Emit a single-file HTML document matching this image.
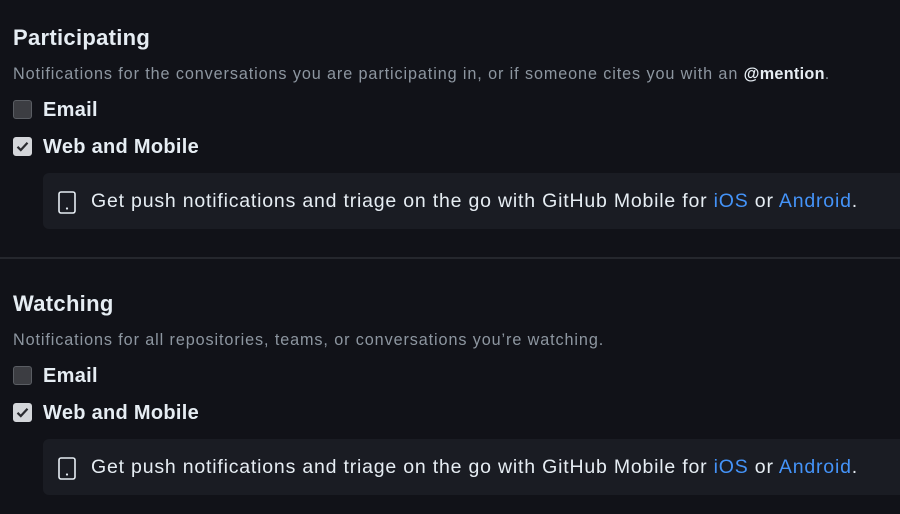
<!DOCTYPE html>
<html><head><style>
html,body{margin:0;padding:0;background:#111218;width:900px;height:514px;overflow:hidden;font-family:"Liberation Sans",sans-serif;}
.sec{position:absolute;left:0;width:900px;}
h2{position:absolute;left:13px;margin:0;font-size:22px;font-weight:600;color:#e6edf3;white-space:nowrap;letter-spacing:0.3px;}
.desc{position:absolute;left:13px;font-size:16.2px;letter-spacing:0.9px;color:#8d96a0;white-space:nowrap;}
.desc b{color:#e6edf3;letter-spacing:0.3px;}
.row{position:absolute;left:13px;height:19px;}
.cb{position:absolute;left:0;top:0;width:17px;height:17px;border:1px solid #5a5d63;border-radius:3px;background:#3c3d42;}
.cb.on{background:#d4d6da;border-color:#d4d6da;}
.lbl{position:absolute;left:30px;top:-1px;font-size:20px;font-weight:700;color:#e6edf3;white-space:nowrap;letter-spacing:0.3px;}
.box{position:absolute;left:43px;width:880px;height:56px;background:#1a1c23;border-radius:6px;}
.box svg{position:absolute;left:15px;top:18px;}
.box span{position:absolute;left:48px;top:17px;font-size:19.5px;letter-spacing:0.8px;color:#e6edf3;white-space:nowrap;}
.box a{color:#4493f8;text-decoration:none;}
.hr{position:absolute;left:0;top:257px;width:900px;height:2px;background:#25272d;}
</style></head><body>
<div class="sec" style="top:0">
<h2 style="top:25px">Participating</h2>
<div class="desc" style="top:65px">Notifications for the conversations you are participating in, or if someone cites you with an <b>@mention</b>.</div>
<div class="row" style="top:100px"><div class="cb"></div><div class="lbl">Email</div></div>
<div class="row" style="top:137px"><div class="cb on"><svg width="17" height="17" viewBox="0 0 17 17"><path d="M3.5 8.8 L6.8 12 L13.5 4.8" fill="none" stroke="#2a2b30" stroke-width="2.2"/></svg></div><div class="lbl">Web and Mobile</div></div>
<div class="box" style="top:173px"><svg width="18" height="23" viewBox="0 0 18 23"><rect x="1" y="1" width="16" height="21" rx="2" fill="none" stroke="#e6edf3" stroke-width="1.6"/><circle cx="9" cy="17.5" r="1.1" fill="#e6edf3"/></svg><span>Get push notifications and triage on the go with GitHub Mobile for <a>iOS</a> or <a>Android</a>.</span></div>
</div>
<div class="hr"></div>
<div class="sec" style="top:266px">
<h2 style="top:25px">Watching</h2>
<div class="desc" style="top:65px">Notifications for all repositories, teams, or conversations you’re watching.</div>
<div class="row" style="top:100px"><div class="cb"></div><div class="lbl">Email</div></div>
<div class="row" style="top:137px"><div class="cb on"><svg width="17" height="17" viewBox="0 0 17 17"><path d="M3.5 8.8 L6.8 12 L13.5 4.8" fill="none" stroke="#2a2b30" stroke-width="2.2"/></svg></div><div class="lbl">Web and Mobile</div></div>
<div class="box" style="top:173px"><svg width="18" height="23" viewBox="0 0 18 23"><rect x="1" y="1" width="16" height="21" rx="2" fill="none" stroke="#e6edf3" stroke-width="1.6"/><circle cx="9" cy="17.5" r="1.1" fill="#e6edf3"/></svg><span>Get push notifications and triage on the go with GitHub Mobile for <a>iOS</a> or <a>Android</a>.</span></div>
</div>
</body></html>
